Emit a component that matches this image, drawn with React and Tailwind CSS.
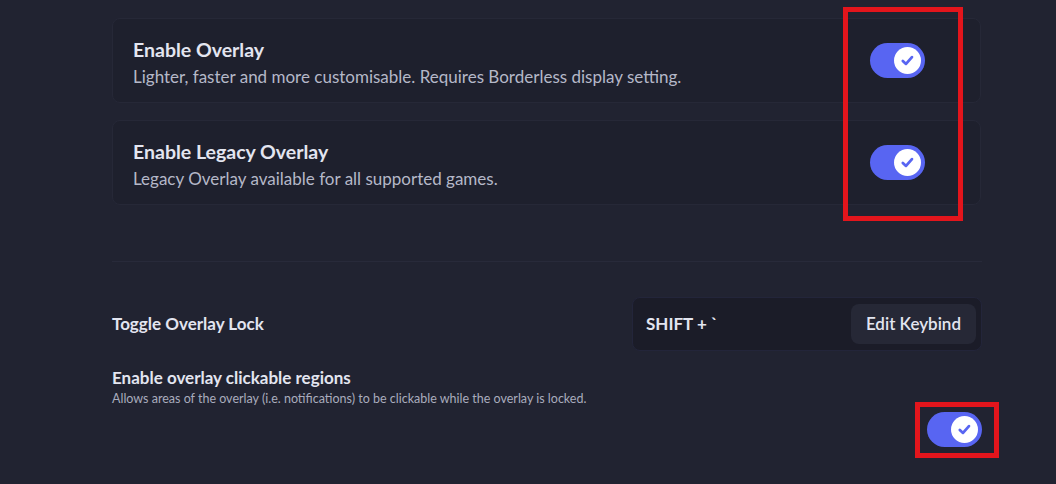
import React from 'react'

const font = { fontFamily: 'Lato, "Noto Sans", sans-serif' }

function Toggle() {
  return (
    <div className="w-[55px] h-[35px] rounded-full bg-[#5865f2] flex items-center justify-end pr-[4px] shrink-0">
      <div className="w-[27px] h-[27px] rounded-full bg-white flex items-center justify-center">
        <svg width="17" height="17" viewBox="0 0 16 16" fill="none">
          <path d="M3.6 8.4 L6.6 11.2 L12.2 4.8" stroke="#5865f2" strokeWidth="2.6" strokeLinecap="round" strokeLinejoin="round" />
        </svg>
      </div>
    </div>
  )
}

function Card({ title, desc }) {
  return (
    <div className="h-[85px] w-[869px] rounded-lg border border-[#262837] bg-[#1e202d] flex items-center justify-between pl-[20px] pr-[55px]">
      <div className="pt-[4px]">
        <div className="text-[19.5px] leading-[24px] font-bold text-[#e3e5f0]">{title}</div>
        <div className="text-[17px] leading-[22px] text-[#b5b8c8] mt-[4px]">{desc}</div>
      </div>
      <Toggle />
    </div>
  )
}

export default function App() {
  return (
    <div className="relative w-[1056px] h-[484px] overflow-hidden bg-[#212331]" style={font}>
      <div className="pl-[112px] pt-[18px] w-[982px]">
        <div className="flex flex-col gap-[17px]">
          <Card title="Enable Overlay" desc="Lighter, faster and more customisable. Requires Borderless display setting." />
          <Card title="Enable Legacy Overlay" desc="Legacy Overlay available for all supported games." />
        </div>

        <div className="mt-[56px] h-px bg-[#282a3a]" />

        <div className="mt-[35px] flex items-center justify-between">
          <div className="text-[17px] font-bold text-[#e3e5f0]">Toggle Overlay Lock</div>
          <div className="w-[350px] h-[54px] rounded-lg border border-[#23253a] bg-[#1b1c28] flex items-center justify-between pl-[13px] pr-[5px]">
            <span className="text-[17px] font-bold text-[#e3e5f0]">SHIFT + `</span>
            <button className="h-[40px] px-[15px] rounded-lg bg-[#262836] text-[17px] font-semibold text-[#e3e5f0]">Edit Keybind</button>
          </div>
        </div>

        <div className="mt-[15px]">
          <div className="text-[17px] leading-[24px] font-bold text-[#e3e5f0]">Enable overlay clickable regions</div>
          <div className="text-[12.5px] leading-[18px] text-[#a9acbd]">Allows areas of the overlay (i.e. notifications) to be clickable while the overlay is locked.</div>
        </div>

        <div className="mt-[4px] flex justify-end">
          <Toggle />
        </div>
      </div>

      {/* red highlight boxes */}
      <div className="absolute left-[843px] top-[7px] w-[120px] h-[214px] border-[5px] border-[#e3151c]" />
      <div className="absolute left-[915px] top-[402px] w-[84px] h-[56px] border-[5px] border-[#e3151c]" />
    </div>
  )
}
